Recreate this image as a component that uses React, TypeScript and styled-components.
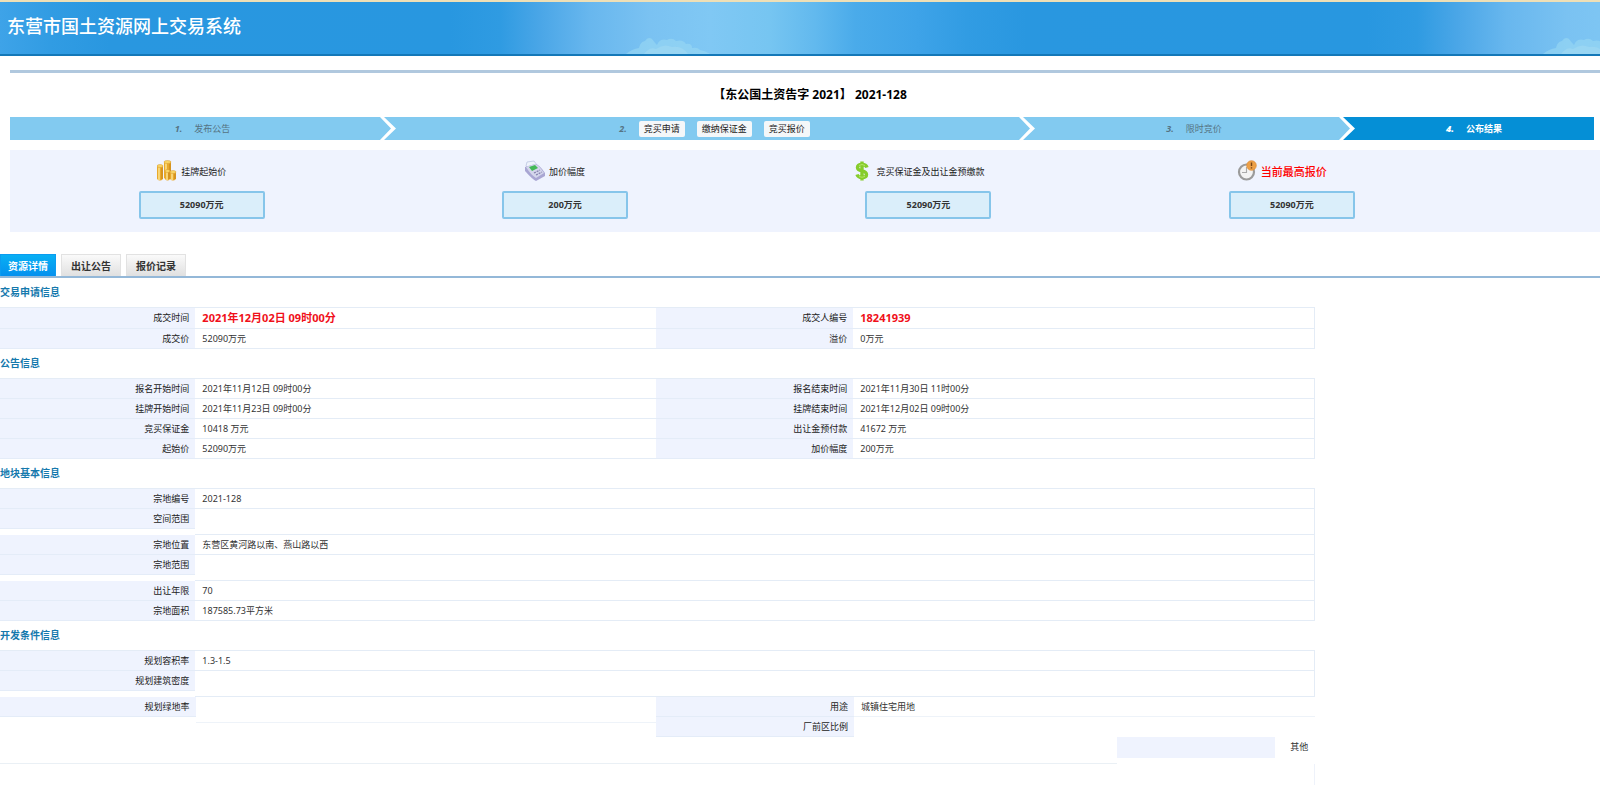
import React from 'react';
import styled, { createGlobalStyle, css } from 'styled-components';

const GlobalStyle = createGlobalStyle`
  * { box-sizing: border-box; }
  body {
    margin: 0;
    background: #fff;
    color: #333;
    font: 9px/19px "Noto Sans", "Noto Sans CJK SC", sans-serif;
  }
`;

const Page = styled.div`
  overflow: hidden;
`;

const Header = styled.header`
  position: relative;
  overflow: hidden;
  height: 56px;
  padding: 0 7px;
  border-top: 2px solid #eedfb6;
  border-bottom: 2px solid #1478b8;
  background: linear-gradient(
      90deg,
      #3ea3e8 0,
      #319ce3 50px,
      #2997e0 110px,
      #2897e0 450px,
      #2f9be2 500px,
      #4aa6e7 540px,
      #68b7ee 590px,
      #7ac2f2 650px,
      #80c8f4 710px,
      #76c5f1 770px,
      #62b9ee 815px,
      #4aabea 855px,
      #3ea3e8 917px
    )
    0 0 / 917px 100% repeat-x;
`;

const SiteName = styled.h1`
  margin: 0;
  color: #fff;
  font-size: 18px;
  font-weight: 500;
  line-height: 48px;
`;

const Cloud = styled.svg<{ $left: number }>`
  position: absolute;
  bottom: 0;
  left: ${(p) => p.$left}px;
  width: 84px;
  height: 18px;
`;

const Main = styled.main`
  margin: 14px 0 0 10px;
  border-top: 3px solid #b0c8de;
`;

const Title = styled.h2`
  margin: 0;
  padding: 11px 0 0 10px;
  color: #000;
  font-size: 12px;
  line-height: 22px;
  text-align: center;
  white-space: pre;
`;

const Steps = styled.ol`
  display: flex;
  margin: 11px 6px 10px 0;
  padding: 0;
  list-style: none;
`;

const Step = styled.li<{ $share: number; $active?: boolean }>`
  position: relative;
  display: flex;
  flex: ${(p) => p.$share} 1 0;
  align-items: center;
  justify-content: center;
  gap: 12px;
  height: 23px;
  background: ${(p) => (p.$active ? '#058fd6' : '#82caf0')};
  color: ${(p) => (p.$active ? '#fff' : '#557383')};
  font-weight: ${(p) => (p.$active ? 600 : 400)};
`;

const StepNumber = styled.b`
  font-style: italic;
`;

const StepArrow = styled.svg<{ $active?: boolean }>`
  position: absolute;
  z-index: 1;
  top: 0;
  right: -2px;
  width: 17px;
  height: 23px;
  fill: ${(p) => (p.$active ? '#058fd6' : '#82caf0')};
`;

const Chip = styled.button`
  height: 16px;
  padding: 0 5px;
  border: 0;
  border-radius: 2px;
  background: #f4f7f9;
  color: #222;
  font: inherit;
  line-height: 16px;
`;

const Stats = styled.section`
  display: flex;
  height: 82px;
  padding: 7px 0 0 10px;
  background: #eff3fe;
`;

const Stat = styled.div`
  display: flex;
  flex: 0 0 23%;
  flex-direction: column;
  align-items: center;
`;

const StatLabel = styled.div<{ $hot?: boolean }>`
  display: flex;
  align-items: center;
  gap: 4px;
  height: 28px;
  padding-right: 20px;
  color: #222;
  ${(p) =>
    p.$hot &&
    css`
      color: #f00;
      font-size: 11px;
      font-weight: 500;
    `}
`;

const StatIcon = styled.svg`
  width: 20px;
  height: 22px;
`;

const StatValue = styled.div`
  width: 126px;
  margin-top: 6px;
  border: 2px solid #86c5ea;
  border-radius: 2px;
  background: #daeefa;
  color: #333;
  font-weight: 700;
  line-height: 24px;
  text-align: center;
`;

const Tabs = styled.nav`
  display: flex;
  gap: 5px;
  margin-top: 22px;
  border-bottom: 2px solid #94b8d8;
`;

const Tab = styled.button<{ $active?: boolean }>`
  height: 22px;
  padding: 0 9px;
  border: 1px solid #e2e2e2;
  border-bottom: 0;
  background: linear-gradient(#fafafa, #e0e0e0);
  color: #333;
  font: inherit;
  font-size: 10px;
  font-weight: 700;
  line-height: 22px;
  ${(p) =>
    p.$active &&
    css`
      padding: 0 7px;
      border-color: #0c9cf0;
      background: linear-gradient(#08b0f4, #0590ee);
      color: #fff;
    `}
`;

const Details = styled.div`
  width: 82.3%;
  margin-left: -2px;
`;

const SectionTitle = styled.h3`
  margin: 0;
  padding: 0 2px;
  color: #1579ad;
  font-size: 10px;
  line-height: 29px;
`;

const Table = styled.table`
  width: 100%;
  border-top: 1px solid #e4ecf6;
  border-right: 1px solid #e4ecf6;
  border-collapse: separate;
  border-spacing: 0;
  table-layout: fixed;
`;

const LabelCell = styled.th`
  width: 15%;
  padding: 0;
  font-weight: 400;
  text-align: right;
  vertical-align: top;
`;

const labelLook = css`
  padding-right: 6px;
  border-bottom: 1px solid #e4ecf8;
  background: #eff3fe;
  color: #222;
  line-height: 19px;
  text-align: right;
`;

const LabelFill = styled.div<{ $hot?: boolean }>`
  ${labelLook}
  line-height: ${(p) => (p.$hot ? 20 : 19)}px;
`;

const ValueCell = styled.td<{ $hot?: boolean; $tall?: boolean }>`
  height: ${(p) => (p.$tall ? 26 : 20)}px;
  padding: 0 0 0 7px;
  border-bottom: 1px solid #e4ecf6;
  vertical-align: top;
  ${(p) =>
    p.$hot &&
    css`
      color: #f0101a;
      font-size: 11px;
      font-weight: 700;
      line-height: 20px;
    `}
`;

const Pairs = styled.dl`
  display: flex;
  align-items: flex-start;
  margin: 0;
`;

const PairHalf = styled.div`
  display: grid;
  flex: 1 1 50%;
  grid-template-columns: 30% 70%;
`;

const Term = styled.dt`
  ${labelLook}
  height: 20px;
`;

const Definition = styled.dd<{ $tall?: boolean; $open?: boolean }>`
  height: ${(p) => (p.$tall ? 26 : 20)}px;
  margin: 0;
  padding-left: 7px;
  border-bottom: ${(p) => (p.$open ? 0 : 1)}px solid #eef3f9;
`;

const OtherRow = styled.div`
  display: flex;
  height: 27px;
`;

const OtherBlank = styled.div`
  flex: 0 0 85%;
  border-bottom: 1px solid #eaf0f5;
`;

const OtherFill = styled.div`
  flex: 0 0 12%;
  height: 21px;
  background: #eff3fe;
`;

const OtherLabel = styled.div`
  padding-left: 15px;
`;

const Tail = styled.div`
  height: 21px;
  border-right: 1px solid #eef2fa;
`;

type Field = { label: string; value?: string; hot?: boolean; tall?: boolean };

const applyRows: Field[][] = [
  [
    { label: '成交时间', value: '2021年12月02日 09时00分', hot: true },
    { label: '成交人编号', value: '18241939', hot: true },
  ],
  [
    { label: '成交价', value: '52090万元' },
    { label: '溢价', value: '0万元' },
  ],
];

const noticeRows: Field[][] = [
  [
    { label: '报名开始时间', value: '2021年11月12日 09时00分' },
    { label: '报名结束时间', value: '2021年11月30日 11时00分' },
  ],
  [
    { label: '挂牌开始时间', value: '2021年11月23日 09时00分' },
    { label: '挂牌结束时间', value: '2021年12月02日 09时00分' },
  ],
  [
    { label: '竞买保证金', value: '10418 万元' },
    { label: '出让金预付款', value: '41672 万元' },
  ],
  [
    { label: '起始价', value: '52090万元' },
    { label: '加价幅度', value: '200万元' },
  ],
];

const landRows: Field[][] = [
  [{ label: '宗地编号', value: '2021-128' }],
  [{ label: '空间范围', tall: true }],
  [{ label: '宗地位置', value: '东营区黄河路以南、燕山路以西' }],
  [{ label: '宗地范围', tall: true }],
  [{ label: '出让年限', value: '70' }],
  [{ label: '宗地面积', value: '187585.73平方米' }],
];

const buildRows: Field[][] = [
  [{ label: '规划容积率', value: '1.3-1.5' }],
  [{ label: '规划建筑密度', tall: true }],
];

function FieldTable({ rows }: { rows: Field[][] }) {
  const single = rows[0].length === 1;
  return (
    <Table>
      <tbody>
        {rows.map((row) => (
          <tr key={row[0].label}>
            {row.map((f) => (
              <React.Fragment key={f.label}>
                <LabelCell scope="row">
                  <LabelFill $hot={f.hot}>{f.label}</LabelFill>
                </LabelCell>
                <ValueCell $hot={f.hot} $tall={f.tall} colSpan={single ? 3 : 1}>
                  {f.value}
                </ValueCell>
              </React.Fragment>
            ))}
          </tr>
        ))}
      </tbody>
    </Table>
  );
}

function Arrow() {
  return (
    <StepArrow viewBox="0 0 17 23" aria-hidden="true">
      <path d="M0 0L4 0L16 11.500L4 23L0 23L11 11.500Z" fill="#fff" />
    </StepArrow>
  );
}

function ActiveArrow() {
  return (
    <StepArrow viewBox="0 0 17 23" $active aria-hidden="true">
      <path d="M2 0H17V23H2L14 11.500Z" />
      <path d="M0 0H4L16 11.500L4 23H0L11 11.500Z" fill="#fff" />
    </StepArrow>
  );
}

function CloudShape({ left }: { left: number }) {
  return (
    <Cloud viewBox="0 0 84 18" $left={left} aria-hidden="true">
      <path
        d="M0 18Q6 13 13 12Q14 6 19 5Q22 0 26 3Q29 7 31 9Q34 2 41 4Q46 1 50 5Q57 3 60 8Q66 7 66 12Q72 11 74 14Q80 15 84 18Z"
        fill="#9ad8f3"
        opacity="0.6"
      />
      <path d="M18 18Q24 10 30 13Q38 7 46 11Q56 9 62 18Z" fill="#a6dcf4" opacity="0.5" />
    </Cloud>
  );
}

function CoinsIcon() {
  const stack = (x: number, top: number, bottom: number, w: number) => (
    <g key={x}>
      <path d={`M${x} ${top}V${bottom}Q${x + w / 2} ${bottom + 3} ${x + w} ${bottom}V${top}Z`} fill="#e9a92c" />
      <path d={`M${x + 2} ${top + 1}V${bottom + 1}`} stroke="#fbe08a" strokeWidth="1.600" />
      <path d={`M${x + w - 1} ${top}V${bottom}`} stroke="#c27f14" strokeWidth="1" />
      <ellipse cx={x + w / 2} cy={top} rx={w / 2} ry="1.500" fill="#f9d566" stroke="#d6962a" strokeWidth="0.500" />
    </g>
  );
  return (
    <StatIcon viewBox="0 0 20 22" aria-hidden="true">
      {stack(7, 2, 18, 7)}
      {stack(0, 6, 19, 6)}
      {stack(8, 11, 19, 5)}
      {stack(13, 12, 19, 6)}
    </StatIcon>
  );
}

function TerminalIcon() {
  return (
    <StatIcon viewBox="0 0 20 22" aria-hidden="true">
      <path d="M1 6L2 2L9 1L12 5L5 10Z" fill="#eef3fb" stroke="#b4bfdc" strokeWidth="0.700" />
      <path d="M0 7L10 4Q14 4 20 13V16L11 21Q8 20 0 11Z" fill="#a9a6d3" />
      <path d="M1 7L10 4Q14 5 19 13L11 18Q6 15 1 7Z" fill="#d4d6ec" />
      <path d="M4 7L10 5L13 8L7 11Z" fill="#43b957" />
      <path d="M9 13L15 10M11 15L17 12" stroke="#8581ae" strokeWidth="1.300" strokeDasharray="2 1" />
    </StatIcon>
  );
}

function DollarIcon() {
  return (
    <StatIcon viewBox="0 0 20 22" aria-hidden="true">
      <path
        d="M15 7.500Q14 4.500 10 4.500Q5.500 4.500 5.500 7.500Q5.500 10 10 10.800Q14.500 11.800 14.500 14.500Q14.500 17.500 10 17.500Q6 17.500 5 14.500M10 1.500V20.500"
        fill="none"
        stroke="#86cc2c"
        strokeWidth="3.400"
      />
      <path d="M13 5.500Q10 3.500 7 5.500M7 16.500Q10 18 13 16.500" fill="none" stroke="#b5e665" strokeWidth="1" />
    </StatIcon>
  );
}

function ClockIcon() {
  return (
    <StatIcon viewBox="0 0 20 22" aria-hidden="true">
      <circle cx="9.500" cy="12" r="7.500" fill="#f3f3f3" stroke="#9b9b9b" strokeWidth="2.200" />
      <path d="M9.500 7V12.500H5" fill="none" stroke="#aaa" strokeWidth="1.100" />
      <circle cx="14.500" cy="5.500" r="4.800" fill="#eda047" stroke="#dc8d35" strokeWidth="0.700" />
      <path d="M14.500 2.500V6M14.500 7.300V8.500" stroke="#794618" strokeWidth="1.400" />
    </StatIcon>
  );
}

export default function App() {
  return (
    <Page lang="zh-CN">
      <GlobalStyle />
      <Header>
        <CloudShape left={626} />
        <CloudShape left={1543} />
        <SiteName>东营市国土资源网上交易系统</SiteName>
      </Header>

      <Main>
        <Title>【东公国土资告字 2021】 2021-128</Title>
        <Steps>
          <Step $share={385}>
            <StepNumber>1.</StepNumber>
            <span>发布公告</span>
            <Arrow />
          </Step>
          <Step $share={639}>
            <StepNumber>2.</StepNumber>
            <Chip type="button">竞买申请</Chip>
            <Chip type="button">缴纳保证金</Chip>
            <Chip type="button">竞买报价</Chip>
            <Arrow />
          </Step>
          <Step $share={320}>
            <StepNumber>3.</StepNumber>
            <span>限时竞价</span>
            <ActiveArrow />
          </Step>
          <Step $share={240} $active>
            <StepNumber>4.</StepNumber>
            <span>公布结果</span>
          </Step>
        </Steps>

        <Stats>
          <Stat>
            <StatLabel>
              <CoinsIcon />
              挂牌起始价
            </StatLabel>
            <StatValue>52090万元</StatValue>
          </Stat>
          <Stat>
            <StatLabel>
              <TerminalIcon />
              加价幅度
            </StatLabel>
            <StatValue>200万元</StatValue>
          </Stat>
          <Stat>
            <StatLabel>
              <DollarIcon />
              竞买保证金及出让金预缴款
            </StatLabel>
            <StatValue>52090万元</StatValue>
          </Stat>
          <Stat>
            <StatLabel $hot>
              <ClockIcon />
              当前最高报价
            </StatLabel>
            <StatValue>52090万元</StatValue>
          </Stat>
        </Stats>
      </Main>

      <Tabs>
        <Tab type="button" $active>
          资源详情
        </Tab>
        <Tab type="button">出让公告</Tab>
        <Tab type="button">报价记录</Tab>
      </Tabs>

      <Details>
        <SectionTitle>交易申请信息</SectionTitle>
        <FieldTable rows={applyRows} />
        <SectionTitle>公告信息</SectionTitle>
        <FieldTable rows={noticeRows} />
        <SectionTitle>地块基本信息</SectionTitle>
        <FieldTable rows={landRows} />
        <SectionTitle>开发条件信息</SectionTitle>
        <FieldTable rows={buildRows} />
        <Pairs>
          <PairHalf>
            <Term>规划绿地率</Term>
            <Definition $tall />
          </PairHalf>
          <PairHalf>
            <Term>用途</Term>
            <Definition>城镇住宅用地</Definition>
            <Term>厂前区比例</Term>
            <Definition $open />
          </PairHalf>
        </Pairs>
        <OtherRow>
          <OtherBlank />
          <OtherFill />
          <OtherLabel>其他</OtherLabel>
        </OtherRow>
        <Tail />
      </Details>
    </Page>
  );
}
